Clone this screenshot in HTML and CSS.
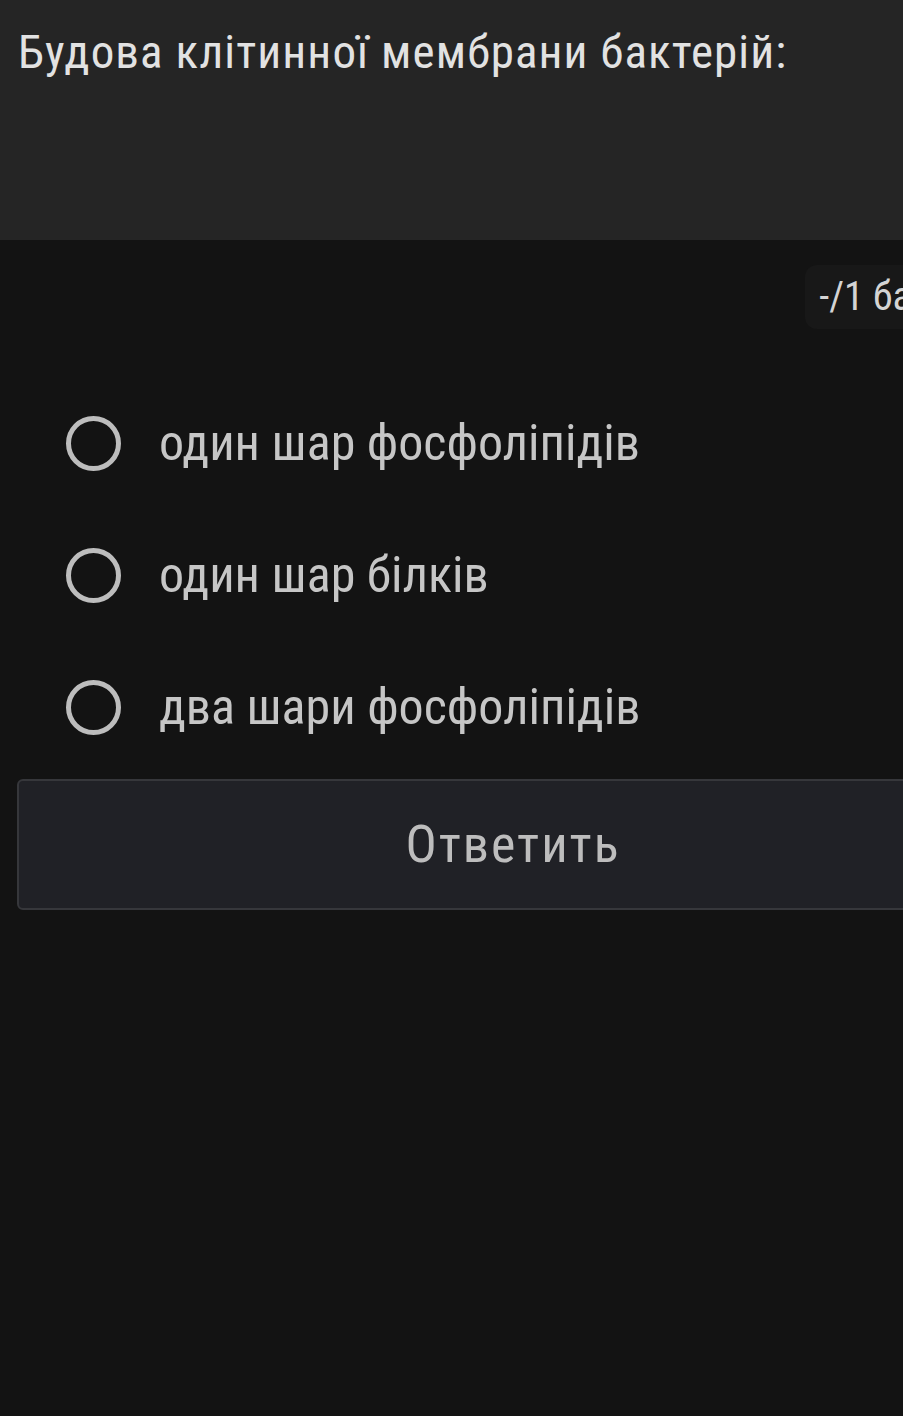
FILE: index.html
```html
<!DOCTYPE html>
<html lang="uk">
<head>
    <meta charset="UTF-8">
    <meta name="viewport" content="width=device-width, initial-scale=1.0">
    <title>Тест</title>
    <link rel="stylesheet" href="styles.css">
</head>
<body>
    <div class="screen">
        <div class="question">
            <h1 class="question-text">Будова клітинної мембрани бактерій:</h1>
        </div>

        <div class="score-row">
            <span class="score">-/1 бал</span>
        </div>

        <form class="answers">
            <label class="answer">
                <span class="radio"></span>
                <span class="answer-text">один шар фосфоліпідів</span>
            </label>
            <label class="answer">
                <span class="radio"></span>
                <span class="answer-text">один шар білків</span>
            </label>
            <label class="answer">
                <span class="radio"></span>
                <span class="answer-text">два шари фосфоліпідів</span>
            </label>

            <button type="button" class="submit-button">Ответить</button>
        </form>
    </div>
</body>
</html>
```

FILE: styles.css
```css
* {
    margin: 0;
    padding: 0;
    box-sizing: border-box;
}

html, body {
    background: #131313;
    overflow: hidden;
}

body {
    font-family: 'Roboto', 'Noto Sans', sans-serif;
    min-height: 100vh;
}

.screen {
    width: 1026px;
}

.question {
    height: 240px;
    background: #252525;
    padding: 22px 18px 0;
}

.question-text {
    font-size: 47px;
    font-weight: 400;
    font-stretch: 75%;
    letter-spacing: 1.1px;
    line-height: 60px;
    color: #e2e2e2;
}

.score-row {
    display: flex;
    justify-content: flex-end;
    align-items: flex-start;
    height: 137px;
    padding-top: 25px;
}

.score {
    display: inline-block;
    margin-right: 80px;
    background: #181818;
    border-radius: 12px;
    padding: 10px 14px;
    font-size: 40px;
    font-stretch: 75%;
    line-height: 44px;
    color: #d4d4d4;
}

.answers {
    display: flex;
    flex-direction: column;
    padding-left: 17px;
}

.answer {
    display: flex;
    align-items: center;
    gap: 38px;
    height: 132px;
    padding-left: 49px;
}

.radio {
    width: 55px;
    height: 55px;
    border: 5px solid #bdbdbd;
    border-radius: 50%;
    flex-shrink: 0;
}

.answer-text {
    font-size: 50px;
    font-stretch: 75%;
    color: #c6c6c6;
}

.submit-button {
    width: 992px;
    height: 131px;
    margin-top: 6px;
    background: #202126;
    border: 2px solid #36373b;
    border-radius: 6px;
    color: #bdbdbd;
    font-family: 'Roboto', sans-serif;
    font-size: 52px;
    font-stretch: 75%;
    letter-spacing: 2px;
}
```
